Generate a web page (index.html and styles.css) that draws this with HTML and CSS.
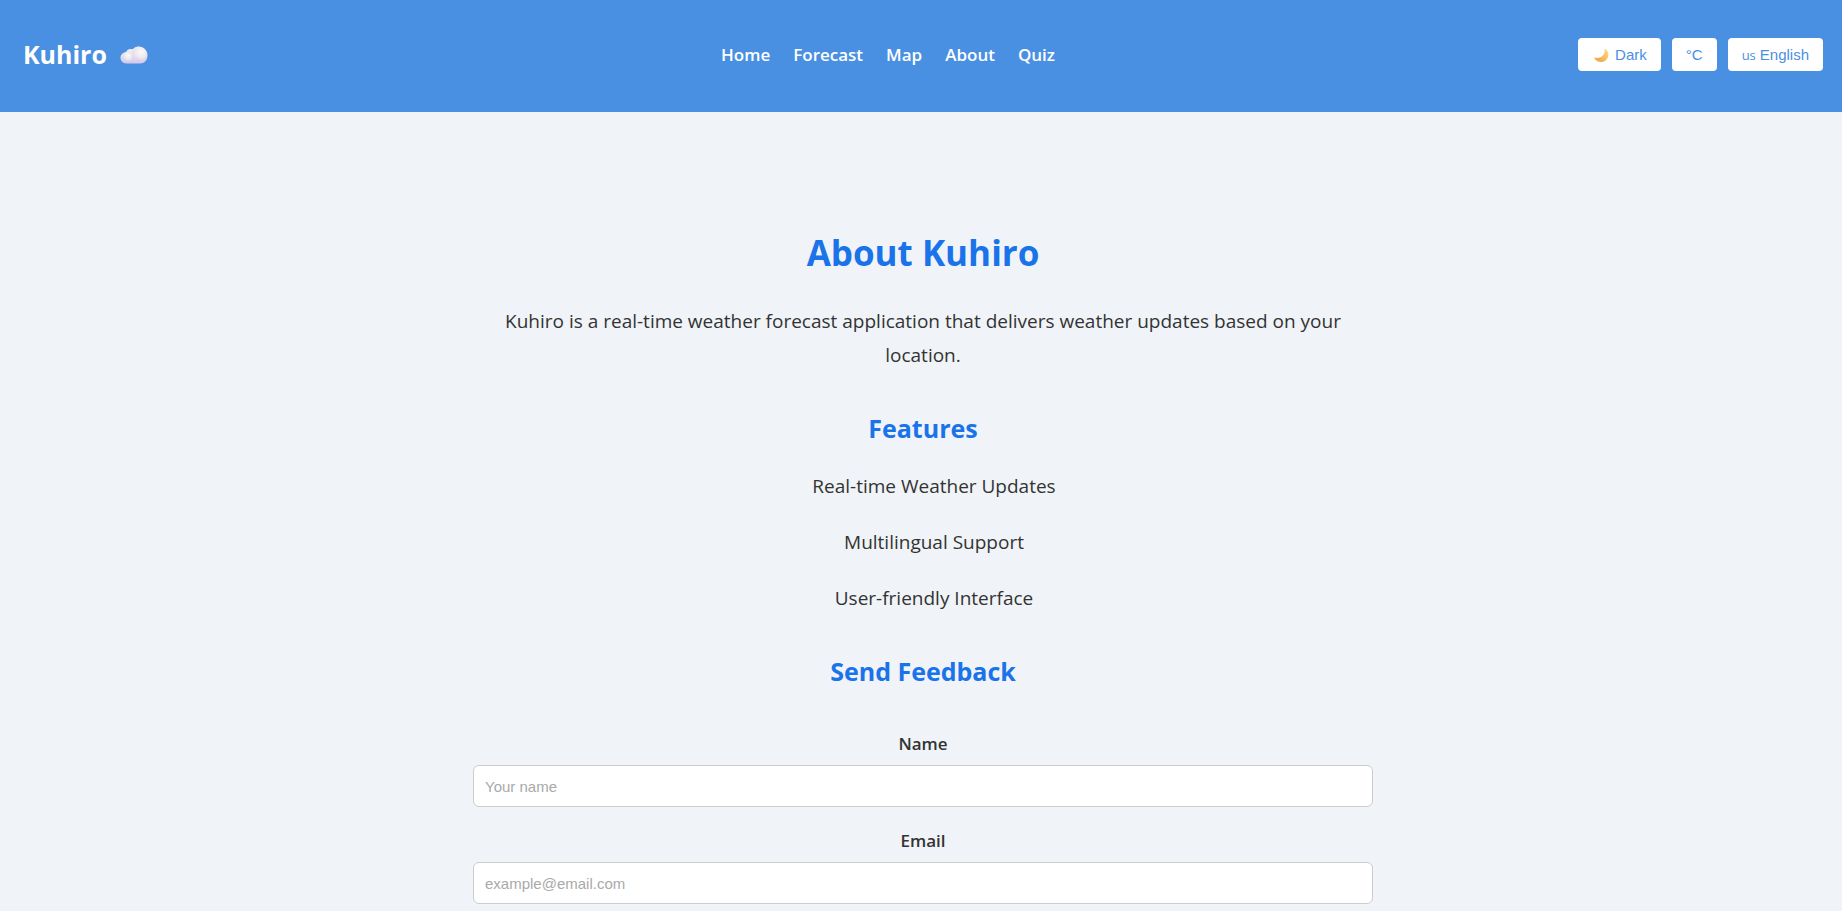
FILE: index.html
```html
<!DOCTYPE html>
<html lang="en">
<head>
  <meta charset="utf-8">
  <meta name="viewport" content="width=device-width, initial-scale=1">
  <title>About Kuhiro</title>
  <link rel="stylesheet" href="styles.css">
</head>
<body>
  <header class="header">
    <div class="logo">
      <span>Kuhiro</span>
      <svg class="logo-cloud" viewBox="0 0 28 18" aria-hidden="true">
        <defs>
          <linearGradient id="cloudBase" x1="0" y1="0" x2="0" y2="1">
            <stop offset="0" stop-color="#f3f1f4"/>
            <stop offset="0.55" stop-color="#e6e1ec"/>
            <stop offset="1" stop-color="#d3c6ec"/>
          </linearGradient>
          <radialGradient id="cloudPuff" cx="0.65" cy="0.35" r="0.65">
            <stop offset="0" stop-color="#fbfafa"/>
            <stop offset="0.6" stop-color="#ebe8ee"/>
            <stop offset="1" stop-color="#d9d0e6" stop-opacity="0"/>
          </radialGradient>
        </defs>
        <path fill="url(#cloudBase)" d="M6 17.5A5.7 5.7 0 0 1 .5 11.8C.5 8.500 3 6.200 6 6.200C6.800 4 8.600 2.900 10.500 2.900C11.300 2.900 12 3 12.600 3.300C14 1.400 16.200.4 18.600.4C23.500.4 27.500 4 27.500 9C27.500 14 24.500 17.500 20 17.500Z"/>
        <circle cx="18.800" cy="8.300" r="7.600" fill="url(#cloudPuff)"/>
        <circle cx="6.800" cy="11" r="5" fill="url(#cloudPuff)"/>
      </svg>
    </div>
    <nav class="nav">
      <a href="#home">Home</a>
      <a href="#forecast">Forecast</a>
      <a href="#map">Map</a>
      <a href="#about">About</a>
      <a href="#quiz">Quiz</a>
    </nav>
    <div class="controls">
      <button class="control" type="button">
        <svg class="moon" viewBox="0 0 16 16" aria-hidden="true">
          <defs>
            <linearGradient id="moonFill" x1="0" y1="1" x2="1" y2="0">
              <stop offset="0" stop-color="#ef9a45"/>
              <stop offset="0.5" stop-color="#f6bd62"/>
              <stop offset="1" stop-color="#fbdc8c"/>
            </linearGradient>
          </defs>
          <path fill="url(#moonFill)" d="M11.500 1.500C14 2.600 15.300 5 15.300 7.900C15.300 12 12 15 8.100 15C4.700 15 2 13.200 1 10.300C2.300 10.900 3.900 11.100 5.500 10.800C9.700 10.100 12.500 6.600 11.500 1.500Z"/>
        </svg>
        <span>Dark</span>
      </button>
      <button class="control" type="button">°C</button>
      <button class="control" type="button"><span class="region">us</span><span>English</span></button>
    </div>
  </header>

  <main class="about">
    <h1 class="title">About Kuhiro</h1>
    <p class="intro">Kuhiro is a real-time weather forecast application that delivers weather updates based on your location.</p>
    <h2 class="subtitle">Features</h2>
    <ul class="features">
      <li>Real-time Weather Updates</li>
      <li>Multilingual Support</li>
      <li>User-friendly Interface</li>
    </ul>
    <h2 class="subtitle">Send Feedback</h2>
    <form class="feedback">
      <div class="field">
        <label for="name">Name</label>
        <input id="name" type="text" placeholder="Your name">
      </div>
      <div class="field">
        <label for="email">Email</label>
        <input id="email" type="email" placeholder="example@email.com">
      </div>
    </form>
  </main>
</body>
</html>
```

FILE: styles.css
```css
* {
  box-sizing: border-box;
}

body {
  margin: 0;
  background: #f0f4f8;
  color: #333;
  font-family: "Segoe UI", "Open Sans", "Noto Sans", sans-serif;
}

.header {
  display: flex;
  justify-content: space-between;
  align-items: center;
  padding: 36px 19px 39px 23px;
  background: #4a90e2;
  color: #fff;
}

.logo {
  display: flex;
  align-items: center;
  gap: 13px;
  padding-right: 50px;
  font-size: 25px;
  font-weight: 700;
  line-height: 37px;
}

.logo-cloud {
  width: 28px;
  height: 18px;
}

.nav {
  display: flex;
  gap: 23px;
}

.nav a {
  color: #fff;
  font-size: 17px;
  font-weight: 600;
  line-height: 24px;
  text-decoration: none;
}

.controls {
  display: flex;
  gap: 11px;
}

.control {
  display: flex;
  align-items: center;
  gap: 4px;
  height: 33px;
  padding: 0 14px;
  border: 0;
  border-radius: 4px;
  background: #fff;
  color: #4a90e2;
  font-family: Arial, "Liberation Sans", sans-serif;
  font-size: 15px;
}

.moon {
  width: 16px;
  height: 16px;
  margin: 0 2px 0 1px;
}

.region {
  font-family: "Segoe UI", "Open Sans", sans-serif;
  font-size: 13px;
}

.about {
  max-width: 904px;
  margin: 0 auto;
  padding: 117px 0 0 4px;
  text-align: center;
}

.title {
  margin: 0 0 27px;
  color: #1a73e8;
  font-size: 35px;
  font-weight: 700;
  line-height: 48px;
}

.intro {
  margin: 0;
  padding: 0 32px;
  font-size: 19px;
  line-height: 34px;
}

.subtitle {
  margin: 38px 0 23px;
  color: #1a73e8;
  font-size: 25px;
  font-weight: 700;
  line-height: 36px;
}

.features {
  display: grid;
  gap: 22px;
  margin: 0;
  padding: 0 0 0 22px;
  list-style: none;
  font-size: 19px;
  line-height: 34px;
}

.feedback {
  display: grid;
  gap: 22px;
  margin-top: 43px;
}

.field {
  display: grid;
  gap: 9px;
}

.field label {
  font-size: 17px;
  font-weight: 600;
  line-height: 24px;
}

.field input {
  width: 100%;
  height: 42px;
  padding: 0 11px;
  border: 1px solid #ccc;
  border-radius: 6px;
  background: #fff;
  color: #333;
  font-family: Arial, "Liberation Sans", sans-serif;
  font-size: 15px;
}

.field input::placeholder {
  color: #a9a9a9;
}
```
